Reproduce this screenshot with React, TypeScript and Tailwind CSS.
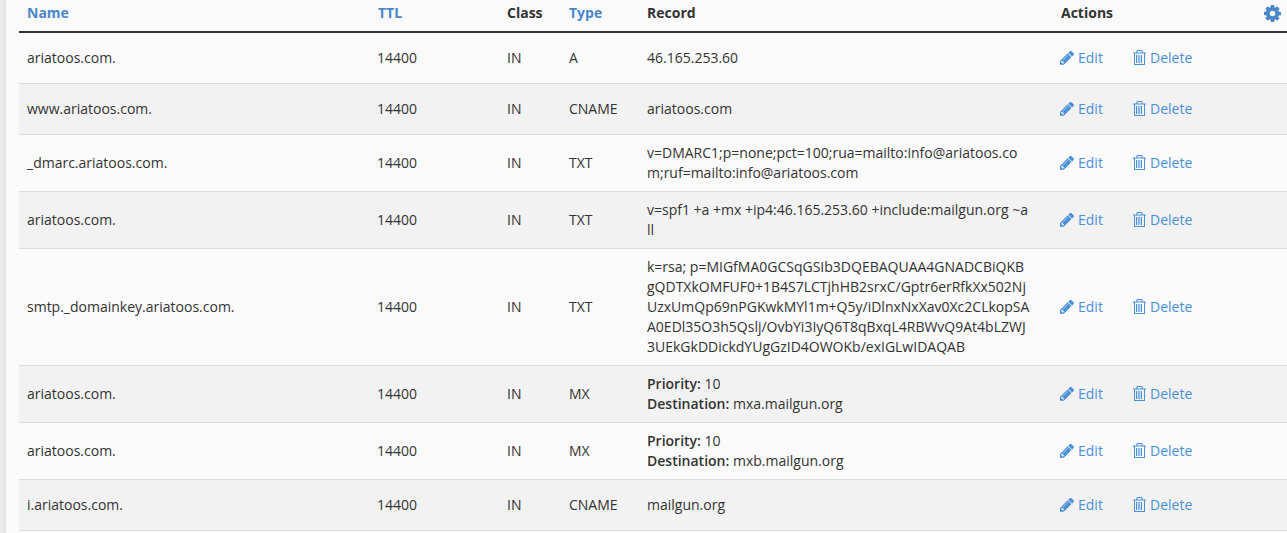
type Row = { name: string; type: string; record: React.ReactNode };

const mx = (host: string) => (
  <>
    <b className="font-semibold">Priority:</b> 10
    <br />
    <b className="font-semibold">Destination:</b> {host}
  </>
);

const rows: Row[] = [
  { name: "ariatoos.com.", type: "A", record: "46.165.253.60" },
  { name: "www.ariatoos.com.", type: "CNAME", record: "ariatoos.com" },
  {
    name: "_dmarc.ariatoos.com.",
    type: "TXT",
    record: "v=DMARC1;p=none;pct=100;rua=mailto:info@ariatoos.com;ruf=mailto:info@ariatoos.com",
  },
  { name: "ariatoos.com.", type: "TXT", record: "v=spf1 +a +mx +ip4:46.165.253.60 +include:mailgun.org ~all" },
  {
    name: "smtp._domainkey.ariatoos.com.",
    type: "TXT",
    record:
      "k=rsa; p=MIGfMA0GCSqGSIb3DQEBAQUAA4GNADCBiQKBgQDTXkOMFUF0+1B4S7LCTjhHB2srxC/Gptr6erRfkXx502NjUzxUmQp69nPGKwkMYl1m+Q5y/iDlnxNxXav0Xc2CLkopSAA0EDl35O3h5Qslj/OvbYi3IyQ6T8qBxqL4RBWvQ9At4bLZWJ3UEkGkDDickdYUgGzID4OWOKb/exIGLwIDAQAB",
  },
  { name: "ariatoos.com.", type: "MX", record: mx("mxa.mailgun.org") },
  { name: "ariatoos.com.", type: "MX", record: mx("mxb.mailgun.org") },
  { name: "i.ariatoos.com.", type: "CNAME", record: "mailgun.org" },
  { name: "", type: "", record: "" },
];

function Pencil() {
  return (
    <svg viewBox="128 220 1520 1420" className="w-[14px] h-[14px] mr-[4px] fill-current" aria-hidden="true">
      <path d="M491 1536l91-91-235-235-91 91v107h128v128h107zm523-928q0-22-22-22-10 0-17 7l-542 542q-7 7-7 17 0 22 22 22 10 0 17-7l542-542q7-7 7-17zm-54-192l416 416-832 832h-416v-416zm683 96q0 53-37 90l-166 166-416-416 166-165q36-38 90-38 53 0 91 38l235 234q37 39 37 91z" />
    </svg>
  );
}

function Trash() {
  return (
    <svg viewBox="0 0 13 15" className="w-[13px] h-[15px] mb-[2px] fill-current" fillRule="evenodd" aria-hidden="true">
      <path d="M4 0h5l1 2.5h3v1h-1V15H1V3.5H0v-1h3L4 0zm.6 1L4.2 2.5h4.6L8.4 1H4.6zM2 3.5V14h9V3.5H2z" />
      <path d="M3 5h1.2v8H3V5zm2.4 0h1.2v8H5.4V5zm2.4 0H9v8H7.8V5z" />
    </svg>
  );
}

function Gear() {
  return (
    <svg viewBox="128 128 1536 1536" className="absolute right-[6px] top-[5px] w-[17px] h-[17px] fill-[#4a86c8]" aria-hidden="true">
      <path d="M1152 896q0-106-75-181t-181-75-181 75-75 181 75 181 181 75 181-75 75-181zm512-109v222q0 12-8 23t-20 13l-185 28q-19 54-39 91 35 50 107 138 10 12 10 25t-9 23q-27 37-99 108t-94 71q-12 0-26-9l-138-108q-44 23-91 38-16 136-29 186-7 28-36 28h-222q-14 0-24.5-8.5t-11.5-21.5l-28-184q-49-16-90-37l-141 107q-10 9-25 9-14 0-25-11-126-114-165-168-7-10-7-23 0-12 8-23 15-21 51-66.5t54-70.5q-27-50-41-99l-183-27q-13-2-21-12.5t-8-23.5v-222q0-12 8-23t19-13l186-28q14-46 39-92-40-57-107-138-10-12-10-24 0-10 9-23 26-36 98.5-107.5t94.5-71.5q13 0 26 10l138 107q44-23 91-38 16-136 29-186 7-28 36-28h222q14 0 24.5 8.5t11.5 21.5l28 184q49 16 90 37l142-107q9-9 24-9 13 0 25 10 129 119 165 170 7 8 7 22 0 12-8 23-15 21-51 66.5t-54 70.5q26 50 41 98l183 28q13 2 21 12.5t8 23.5z" />
    </svg>
  );
}

function Actions() {
  return (
    <div className="flex h-[34px] items-center text-[#4a90d9]">
      <a className="flex items-center w-[73px] -ml-[1px]">
        <Pencil />
        Edit
      </a>
      <a className="flex items-center">
        <Trash />
        <span className="ml-[4px]">Delete</span>
      </a>
    </div>
  );
}

export default function App() {
  return (
    <div className="h-[533px] w-[1287px] overflow-hidden bg-[#fafafa] flex font-['Open_Sans',sans-serif] text-[14px] leading-5 text-[#333333]">
      <div className="w-[6px] shrink-0 bg-gradient-to-r from-[#ededed] to-[#e2e2e2]" />
      <div className="w-[13px] shrink-0" />
      <table className="w-[1268px] h-min table-fixed border-separate border-spacing-0">
        <colgroup>
          <col className="w-[351px]" />
          <col className="w-[129px]" />
          <col className="w-[62px]" />
          <col className="w-[78px]" />
          <col className="w-[414px]" />
          <col className="w-[234px]" />
        </colgroup>
        <thead>
          <tr className="text-left">
            <th className="h-[33px] border-b-2 border-[#333333] px-2 pb-[8px] pt-[3px] font-bold text-[#4a86c8]">Name</th>
            <th className="h-[33px] border-b-2 border-[#333333] px-2 pb-[8px] pt-[3px] font-bold text-[#4a86c8]">TTL</th>
            <th className="h-[33px] border-b-2 border-[#333333] px-2 pb-[8px] pt-[3px] font-bold">Class</th>
            <th className="h-[33px] border-b-2 border-[#333333] px-2 pb-[8px] pt-[3px] font-bold text-[#4a86c8]">Type</th>
            <th className="h-[33px] border-b-2 border-[#333333] px-2 pb-[8px] pt-[3px] font-bold">Record</th>
            <th className="relative h-[33px] border-b-2 border-[#333333] px-2 pb-[8px] pt-[3px] font-bold">
              Actions
              <Gear />
            </th>
          </tr>
        </thead>
        <tbody>
          {rows.map((r, i) => (
            <tr key={i} className={i % 2 ? "bg-[#f2f2f2]" : "bg-[#fafafa]"}>
              <td className="border-b border-[#dddddd] p-2">{r.name}</td>
              <td className="border-b border-[#dddddd] p-2 -indent-[1px]">{r.name ? "14400" : ""}</td>
              <td className="border-b border-[#dddddd] p-2">{r.name ? "IN" : ""}</td>
              <td className="border-b border-[#dddddd] p-2">{r.type}</td>
              <td className="border-b border-[#dddddd] pl-2 pr-[23px] py-2 break-all">{r.record}</td>
              <td className="border-b border-[#dddddd] p-2">{r.name ? <Actions /> : <div className="h-[34px]" />}</td>
            </tr>
          ))}
        </tbody>
      </table>
    </div>
  );
}
